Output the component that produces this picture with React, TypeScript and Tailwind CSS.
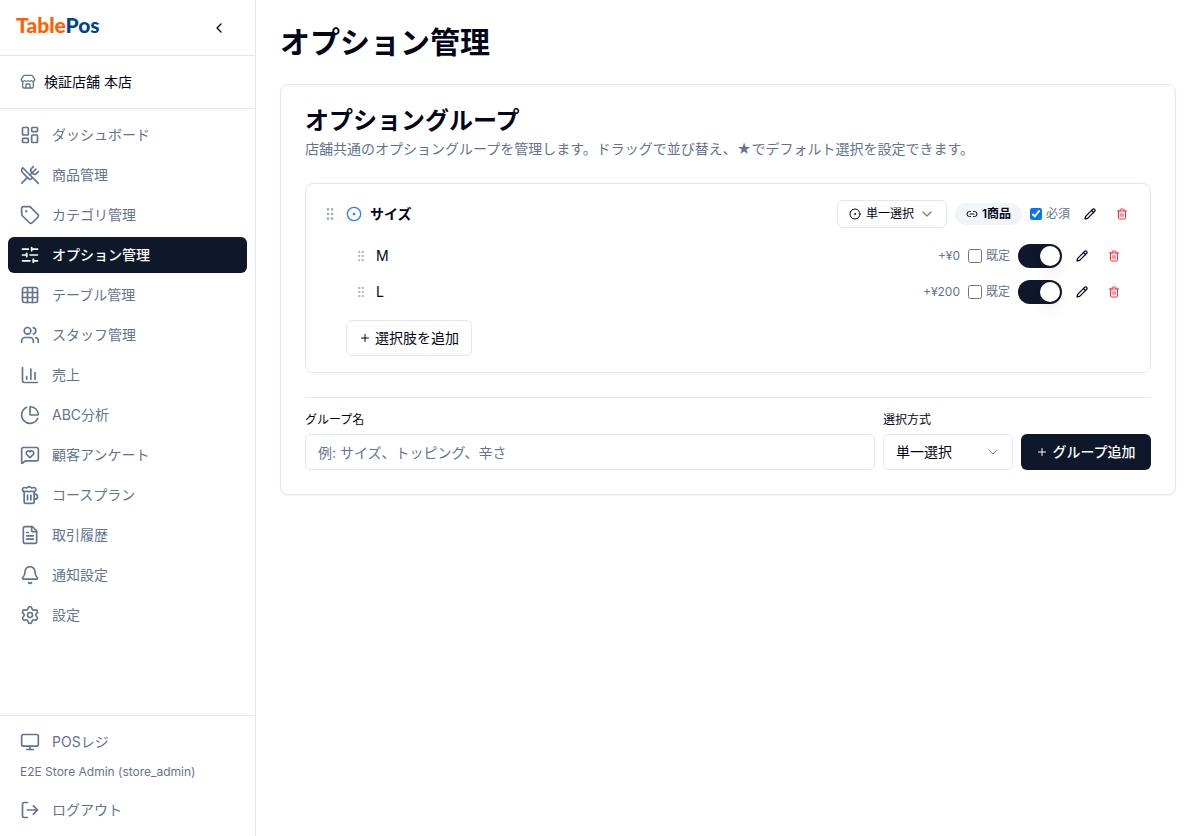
import React, { useState } from 'react';
import {
  Beer,
  Bell,
  ChartColumn,
  ChevronDown,
  ChevronLeft,
  CircleDot,
  FileText,
  Grid3x3,
  GripVertical,
  LayoutDashboard,
  Link2,
  LogOut,
  MessageSquareHeart,
  Monitor,
  Pencil,
  PieChart,
  Plus,
  Settings,
  SlidersHorizontal,
  Store,
  Tag,
  Trash2,
  Users,
  UtensilsCrossed,
} from 'lucide-react';

const navItems = [
  { label: 'ダッシュボード', icon: LayoutDashboard },
  { label: '商品管理', icon: UtensilsCrossed },
  { label: 'カテゴリ管理', icon: Tag },
  { label: 'オプション管理', icon: SlidersHorizontal, active: true },
  { label: 'テーブル管理', icon: Grid3x3 },
  { label: 'スタッフ管理', icon: Users },
  { label: '売上', icon: ChartColumn },
  { label: 'ABC分析', icon: PieChart },
  { label: '顧客アンケート', icon: MessageSquareHeart },
  { label: 'コースプラン', icon: Beer },
  { label: '取引履歴', icon: FileText },
  { label: '通知設定', icon: Bell },
  { label: '設定', icon: Settings },
];

const Sidebar: React.FC = () => (
  <aside className="sticky top-0 flex h-screen w-64 shrink-0 flex-col border-r border-slate-200">
    <div className="flex h-14 items-center justify-between border-b border-slate-200 px-4">
      <a href="#" className="pb-1">
        <svg width="88" height="28" viewBox="0 0 88 28" role="img" aria-label="TablePos">
          <text x="0" y="21" fontFamily="Lato, sans-serif" fontWeight="900" fontSize="21" fill="#ff6000">
            Table<tspan fill="#004680">Pos</tspan>
          </text>
        </svg>
      </a>
      <button type="button" aria-label="閉じる" className="flex size-10 items-center justify-center">
        <ChevronLeft size={16} />
      </button>
    </div>

    <div className="flex h-[53px] items-center gap-2 border-b border-slate-200 px-5 text-sm">
      <Store size={16} className="text-slate-500" />
      検証店舗 本店
    </div>

    <nav className="flex flex-1 flex-col gap-1 overflow-y-auto p-2">
      {navItems.map(({ label, icon: Icon, active }) => (
        <a
          key={label}
          href="#"
          className={`flex h-9 shrink-0 items-center gap-3 rounded-md px-3 text-sm ${
            active ? 'bg-slate-900 font-medium text-slate-50' : 'text-slate-500'
          }`}
        >
          <Icon size={20} />
          {label}
        </a>
      ))}
    </nav>

    <div className="flex flex-col border-t border-slate-200 p-2 text-sm text-slate-500">
      <a href="#" className="flex h-9 items-center gap-3 px-3">
        <Monitor size={20} />
        POSレジ
      </a>
      <p className="px-3 py-1 text-xs">E2E Store Admin (store_admin)</p>
      <button type="button" className="mt-2 flex h-9 items-center gap-3 px-3">
        <LogOut size={20} />
        ログアウト
      </button>
    </div>
  </aside>
);

const RowActions: React.FC = () => (
  <div className="flex gap-2">
    <button type="button" aria-label="編集" className="flex size-6 items-center justify-center">
      <Pencil size={12} strokeWidth={2.5} />
    </button>
    <button type="button" aria-label="削除" className="flex size-6 items-center justify-center text-red-500">
      <Trash2 size={12} />
    </button>
  </div>
);

const ChoiceRow: React.FC<{ name: string; price: string }> = ({ name, price }) => {
  const [enabled, setEnabled] = useState(true);

  return (
    <li className="flex h-9 items-center gap-2 px-2">
      <GripVertical size={14} className="text-slate-500 opacity-50" />
      <span className="flex-1 text-sm">{name}</span>
      <span className="text-xs text-slate-500">{price}</span>
      <label className="flex items-center gap-1 text-xs text-slate-500">
        <input type="checkbox" className="size-3.5" />
        既定
      </label>
      <button
        type="button"
        role="switch"
        aria-checked={enabled}
        aria-label={name}
        onClick={() => setEnabled(!enabled)}
        className={`flex h-6 w-11 items-center rounded-full p-0.5 ${
          enabled ? 'justify-end bg-slate-900' : 'justify-start bg-slate-200'
        }`}
      >
        <span className="size-5 rounded-full bg-white shadow-lg" />
      </button>
      <RowActions />
    </li>
  );
};

const OptionGroup: React.FC = () => (
  <div className="rounded-lg border border-slate-200 p-4">
    <div className="flex h-7 items-center gap-2">
      <GripVertical size={16} className="text-slate-500 opacity-60" />
      <CircleDot size={16} className="text-blue-500" />
      <h3 className="flex-1 text-sm font-semibold">サイズ</h3>
      <div className="relative flex items-center">
        <CircleDot size={12} className="pointer-events-none absolute left-3" />
        <select
          aria-label="サイズの選択方式"
          className="h-7 w-[110px] appearance-none rounded-md border border-slate-200 bg-white pl-7 text-xs"
        >
          <option>単一選択</option>
          <option>複数選択</option>
        </select>
        <ChevronDown size={16} className="pointer-events-none absolute right-3 opacity-50" />
      </div>
      <span className="flex h-[22px] items-center gap-1 rounded-full border border-transparent bg-slate-100 px-2.5 text-xs font-semibold">
        <Link2 size={12} />
        1商品
      </span>
      <label className="flex items-center gap-1 text-xs text-slate-500">
        <input type="checkbox" defaultChecked className="size-3" />
        必須
      </label>
      <RowActions />
    </div>

    <ul className="mt-2.5 ml-6">
      <ChoiceRow name="M" price="+¥0" />
      <ChoiceRow name="L" price="+¥200" />
    </ul>

    <button
      type="button"
      className="mt-2.5 ml-6 flex h-9 items-center gap-1 rounded-md border border-slate-200 px-3 text-sm"
    >
      <Plus size={12} />
      選択肢を追加
    </button>
  </div>
);

const App: React.FC = () => (
  <div className="flex min-h-screen bg-white font-[Inter,'Noto_Sans_CJK_JP',sans-serif] text-slate-950">
    <Sidebar />
    <main className="min-w-0 flex-1 p-6">
      <h1 className="text-3xl font-bold">オプション管理</h1>

      <section className="mt-6 rounded-lg border border-slate-200 p-6 shadow-xs">
        <h2 className="text-2xl leading-6 font-semibold">オプショングループ</h2>
        <p className="mt-1.5 text-sm text-slate-500">
          店舗共通のオプショングループを管理します。ドラッグで並び替え、★でデフォルト選択を設定できます。
        </p>

        <div className="mt-6">
          <OptionGroup />
        </div>

        <form className="mt-6 flex items-end gap-2 border-t border-slate-200 pt-3">
          <div className="flex flex-1 flex-col gap-1">
            <label htmlFor="group-name" className="text-xs leading-5">
              グループ名
            </label>
            <input
              id="group-name"
              type="text"
              placeholder="例: サイズ、トッピング、辛さ"
              className="h-9 w-full rounded-md border border-slate-200 px-3 text-sm placeholder:text-slate-500"
            />
          </div>
          <div className="flex flex-col gap-1">
            <label htmlFor="group-type" className="text-xs leading-5">
              選択方式
            </label>
            <div className="relative flex items-center">
              <select
                id="group-type"
                className="h-9 w-[130px] appearance-none rounded-md border border-slate-200 bg-white px-3 text-sm"
              >
                <option>単一選択</option>
                <option>複数選択</option>
              </select>
              <ChevronDown size={16} strokeWidth={1.5} className="pointer-events-none absolute right-3 opacity-50" />
            </div>
          </div>
          <button
            type="button"
            className="flex h-9 w-[130px] items-center justify-center gap-1 rounded-md bg-slate-900 text-sm font-medium text-slate-50"
          >
            <Plus size={12} />
            グループ追加
          </button>
        </form>
      </section>
    </main>
  </div>
);

export default App;
